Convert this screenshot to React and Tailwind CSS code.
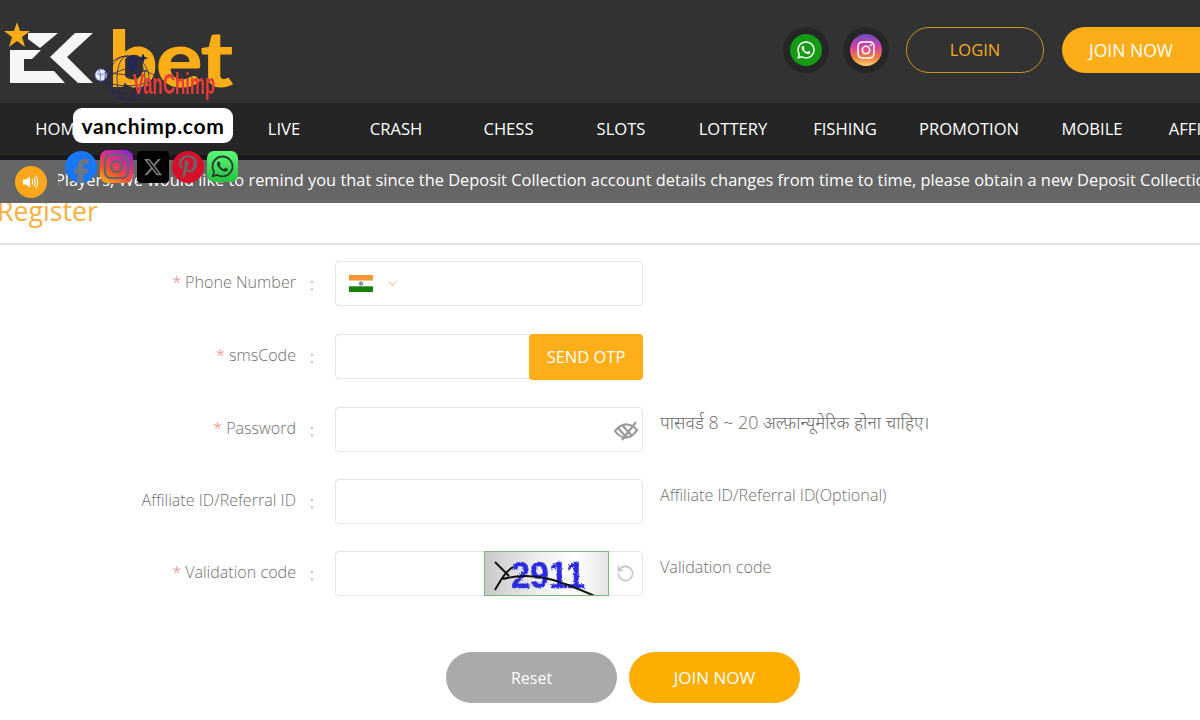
import React from "react";
import { FaFacebookF, FaInstagram, FaXTwitter, FaPinterestP, FaWhatsapp } from "react-icons/fa6";
import { RotateCcw, ChevronDown } from "lucide-react";

const navItems = [
  ["HOME", "w-[120px]"], ["GAME", "w-[108px]"], ["LIVE", "w-[112px]"], ["CRASH", "w-[112px]"], ["CHESS", "w-[113px]"],
  ["SLOTS", "w-[112px]"], ["LOTTERY", "w-[112px]"], ["FISHING", "w-[112px]"], ["PROMOTION", "w-[136px]"], ["MOBILE", "w-[110px]"], ["AFFILIATE", "w-[118px]"],
];

function Logo() {
  return (
    <div className="relative w-[240px] h-[103px] shrink-0">
      <svg className="absolute left-0 top-0" width="110" height="90" viewBox="0 0 110 90">
        <polygon points="17,22 20,31 30,31 22,37 25,47 17,41 9,47 12,37 4,31 14,31" fill="#fbad18" />
        <path d="M28 39 L28 33 H58 L40 48 Z" fill="#f6f6f6" />
        <path d="M10 50 H41 L32 59 H24 V71 H54 L65 83 H10 Z" fill="#f6f6f6" />
        <path d="M75 33 H93 L67 57 L93 83 H78 L50 57 Z" fill="#f6f6f6" />
      </svg>
      <span className="absolute left-[108px] top-[13px] text-[#fbad18] text-[79px] leading-[88px] font-black tracking-[-2px] font-['Lato',sans-serif] scale-x-[1.11] origin-left">bet</span>
      <svg className="absolute left-[92px] top-[54px]" width="64" height="48" viewBox="0 0 64 48" fill="none" stroke="#23265f" strokeWidth="0.800">
        <circle cx="9" cy="21" r="6" fill="#e8ecff" stroke="#5a68c0" />
        <path d="M5 19 Q9 23 14 18 M7 16 Q10 21 8 27" stroke="#5a68c0" />
        <circle cx="35" cy="24" r="22" />
        <ellipse cx="35" cy="24" rx="10" ry="22" />
        <ellipse cx="35" cy="24" rx="18" ry="22" />
        <path d="M14 17 Q35 25 55 16 M13 28 Q35 36 57 28 M17 36 Q35 44 53 36 M13 26 Q35 6 62 21" />
        <path d="M51 -1 l1.500 4 4 1 -4 1.200 -1.500 4.500 -1.500 -4.500 -4 -1.200 4 -1 z" fill="#1c1f52" stroke="none" />
        <ellipse cx="40" cy="10" rx="5" ry="8" fill="#23265f" opacity="0.750" stroke="none" />
      </svg>
      <span className="absolute left-[133px] top-[68px] text-[#e83a3a] text-[30px] leading-[32px] font-bold font-['Liberation_Sans',sans-serif] scale-x-[0.56] origin-left whitespace-nowrap">VanChimp</span>
    </div>
  );
}

function Field({ label, required, top, hint, hintClass, children }) {
  return (
    <div className={`flex items-start h-[45px] ${top}`}>
      <label className="w-[296px] h-[43px] flex items-center justify-end text-[16.100px] font-light text-[#6f6f6f] whitespace-nowrap">
        {required && <span className="text-[#ef7d7d] mr-[4px]">*</span>}
        {label}
      </label>
      <span className="w-[39px] h-[44px] mt-[1px] flex items-center pl-[14px] text-[16px] font-light text-[#6f6f6f]">:</span>
      <div className="w-[308px] h-[45px] shrink-0 relative border border-[#e3e3e8] rounded-[4px] bg-white flex items-center">
        {children}
      </div>
      {hint && <span className={`ml-[17px] leading-[24px] font-light text-[#6f6f6f] whitespace-nowrap ${hintClass}`}>{hint}</span>}
    </div>
  );
}

export default function App() {
  return (
    <div className="w-[1200px] h-[720px] overflow-hidden relative bg-white font-['Open_Sans','Noto_Sans',sans-serif]">
      <header className="h-[103px] bg-[#323232] flex items-start justify-between">
        <Logo />
        <div className="flex items-center mt-[27px]">
          <span className="w-[46px] h-[46px] rounded-full bg-[#262626] flex items-center justify-center">
            <span className="w-[32px] h-[32px] rounded-full bg-[#149a14] flex items-center justify-center">
              <FaWhatsapp className="text-white text-[20px]" />
            </span>
          </span>
          <span className="w-[46px] h-[46px] rounded-full bg-[#262626] flex items-center justify-center ml-[14px]">
            <span className="w-[32px] h-[32px] rounded-full bg-[linear-gradient(180deg,#6a4fc8_0%,#d6409f_40%,#f5803a_75%,#fcd27a_100%)] flex items-center justify-center">
              <FaInstagram className="text-white text-[20px]" />
            </span>
          </span>
          <button className="w-[138px] h-[46px] ml-[17px] pt-[1px] rounded-full border border-[#c9952a] text-[#f9ad1a] text-[16.500px] flex items-center justify-center">LOGIN</button>
          <button className="w-[138px] h-[46px] ml-[18px] pt-[1px] rounded-l-full rounded-r-[24px] bg-[#fcad17] text-white text-[17.500px] flex items-center justify-center">JOIN NOW</button>
        </div>
      </header>

      <nav className="h-[52px] bg-[#252525] flex items-center">
        {navItems.map(([t, w]) => (
          <span key={t} className={`${w} shrink-0 text-center text-white text-[16.600px] whitespace-nowrap`}>{t}</span>
        ))}
      </nav>
      <div className="h-[5px] bg-[#17171c]" />

      <div className="relative z-10 h-[43px] bg-[#666666] flex items-center pl-[15px]">
        <span className="w-[32px] h-[32px] rounded-full bg-[#fba71b] flex items-center justify-center shrink-0">
          <svg width="18" height="16" viewBox="0 0 18 16" fill="none">
            <path d="M1 5.500 H4 L8 2.500 V13.500 L4 10.500 H1 Z" fill="#fff" />
            <path d="M10 5.500 Q11.500 8 10 10.500 M12 3.500 Q14.500 8 12 12.500 M14 2 Q17.500 8 14 14" stroke="#fff" strokeWidth="1.100" />
          </svg>
        </span>
        <div className="ml-[11px] flex-1 overflow-hidden mb-[3px]">
          <p className="-ml-[3px] whitespace-nowrap text-[16.400px] text-white">Players, We would like to remind you that since the Deposit Collection account details changes from time to time, please obtain a new Deposit Collection account</p>
        </div>
      </div>

      <div className="flow-root h-[40px] border-b-2 border-[#e2e2e2] box-content mb-[16px]">
        <h1 className="-ml-[3px] -mt-[12px] text-[26.700px] leading-[40px] text-[#fbb040]">Register</h1>
      </div>

      <main>
        <Field label="Phone Number" required top="mt-[0px]">
          <svg className="ml-[13px]" width="24" height="17" viewBox="0 0 24 17">
            <rect width="24" height="5.700" fill="#f79433" />
            <rect y="5.700" width="24" height="5.600" fill="#fff" />
            <rect y="11.300" width="24" height="5.700" fill="#16810f" />
            <circle cx="12" cy="8.500" r="2.200" fill="#8494b8" />
          </svg>
          <ChevronDown className="ml-[12px] text-[#f5c9a4]" size={15} />
        </Field>

        <Field label="smsCode" required top="mt-[28px]">
          <button className="absolute -right-px -top-px w-[114px] h-[46px] rounded-[4px] bg-[#fdae18] text-white text-[16.500px]">SEND OTP</button>
        </Field>

        <Field label="Password" required top="mt-[28px]" hint="पासवर्ड 8 ~ 20 अल्फ़ान्यूमेरिक होना चाहिए।" hintClass="mt-[3px] text-[17.800px]">
          <svg className="absolute right-[3px] top-[11px]" width="26" height="24" viewBox="0 0 26 24" fill="none" stroke="#9a9a9a" strokeWidth="2.200">
            <path d="M2 12 Q8 5 14 5.500 Q20 6 24 11 Q19 19 12 18.500 Q6 18 2 12 Z" />
            <path d="M5 9 L14 19 M9 6 L19 17 M23 3 L9 21" />
          </svg>
        </Field>

        <Field label="Affiliate ID/Referral ID" top="mt-[27px]" hint="Affiliate ID/Referral ID(Optional)" hintClass="mt-[4px] text-[16.200px]" />

        <Field label="Validation code" required top="mt-[27px]" hint="Validation code" hintClass="mt-[4px] text-[16.200px]">
          <div className="absolute left-[148px] -top-px w-[125px] h-[45px] border border-[#7ab87a] bg-[linear-gradient(90deg,#c9c9c9_0%,#efefef_45%,#ffffff_75%,#e4e4e4_100%)] overflow-hidden">
            <svg width="123" height="43" viewBox="0 0 123 43" fill="none">
              <defs>
                <filter id="rough" x="-5%" y="-10%" width="110%" height="120%">
                  <feTurbulence type="fractalNoise" baseFrequency="0.5" numOctaves="2" seed="4" />
                  <feDisplacementMap in="SourceGraphic" scale="3" />
                </filter>
              </defs>
              <text x="26" y="36" fontFamily="'Liberation Sans',sans-serif" fontWeight="700" fontSize="37" fill="#2c2ce0" stroke="#5a5ae8" strokeWidth="0.500" textLength="74" lengthAdjust="spacingAndGlyphs" filter="url(#rough)">2911</text>
              <path d="M10 10 L24 24 M28 15 C20 20 16 28 10 38 M18 27 C50 18 78 30 112 45" stroke="#111" strokeWidth="2" />
            </svg>
          </div>
          <RotateCcw className="absolute right-[7px] top-[12px] text-[#c4c4c8]" size={19} />
        </Field>

        <div className="mt-[56px] ml-[446px] flex gap-[12px]">
          <button className="w-[171px] h-[51px] rounded-full bg-[#aaaaaa] text-white text-[16px]">Reset</button>
          <button className="w-[171px] h-[51px] rounded-full bg-[#fdae00] text-white text-[17px]">JOIN NOW</button>
        </div>
      </main>

      <div className="absolute z-20 left-[73px] top-[108px] w-[160px] h-[35px] rounded-[9px] bg-white flex items-center justify-center text-black text-[21px] font-bold tracking-[0.700px] font-['Lato',sans-serif]">vanchimp.com</div>
      <div className="absolute z-20 left-[65px] top-[150px] flex items-center">
        <span className="w-[32px] h-[32px] rounded-full bg-[#1877f2] flex items-end justify-center overflow-hidden">
          <FaFacebookF className="text-[#6c7685] text-[25px] translate-y-[1px]" />
        </span>
        <span className="ml-[3px] w-[33px] h-[33px] rounded-[8px] bg-[linear-gradient(30deg,#fbbf1a_0%,#f2502e_35%,#d62a9a_65%,#7a28e0_100%)] flex items-center justify-center">
          <FaInstagram className="text-[#666666] text-[29px]" />
        </span>
        <span className="ml-[4px] w-[32px] h-[32px] rounded-[4px] bg-black flex items-center justify-center">
          <FaXTwitter className="text-[#777777] text-[20px]" />
        </span>
        <span className="ml-[3px] w-[32px] h-[32px] rounded-full bg-[#d80f2b] flex items-center justify-center">
          <FaPinterestP className="text-[#666666] text-[24px]" />
        </span>
        <span className="ml-[3px] w-[31px] h-[31px] rounded-[7px] bg-[linear-gradient(180deg,#5df778,#23c23f)] flex items-center justify-center">
          <FaWhatsapp className="text-[#2b3a2e] text-[25px]" />
        </span>
      </div>
    </div>
  );
}
